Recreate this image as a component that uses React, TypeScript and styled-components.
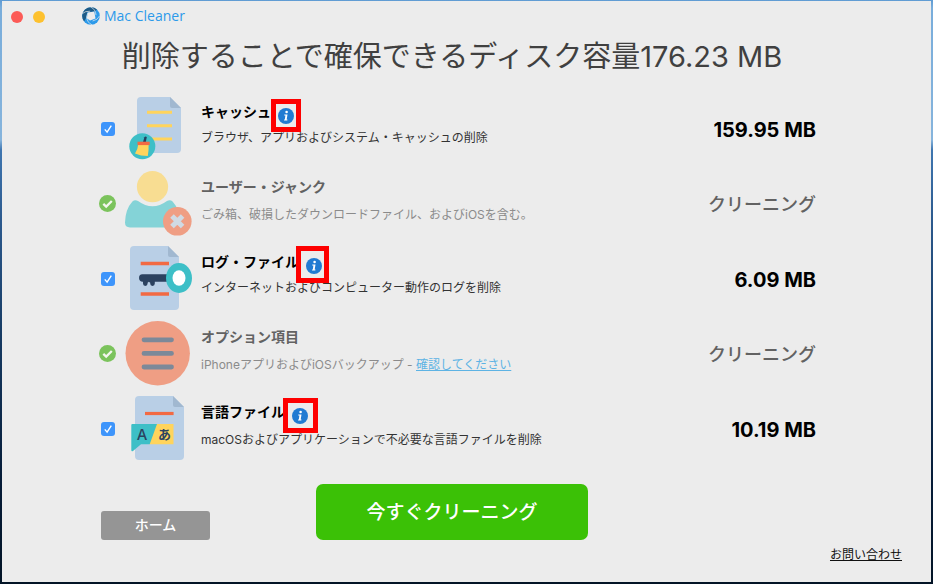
import React from "react";
import styled, { createGlobalStyle } from "styled-components";

const GlobalStyle = createGlobalStyle`
  *, *::before, *::after { box-sizing: border-box; }
  body {
    margin: 0;
    font-family: Inter, "Noto Sans CJK JP", sans-serif;
    color: #000;
  }
`;

const Desktop = styled.div`
  display: flex;
  min-height: 100vh;
  padding: 1px 2px 2px;
  background: linear-gradient(
    #5f9bd3 0, #79addb 8px, #86b4dc 140px, #3f76b0 150px, #2c5a8e 220px, #163a62 340px, #061c38 480px, #031426 100%
  );
`;

const Window = styled.main`
  flex: 1;
  display: flex;
  flex-direction: column;
  padding-right: 29px;
  background: #ececec;
`;

const TitleBar = styled.header`
  display: flex;
  align-items: center;
  height: 31px;
  padding-left: 9px;
`;

const WindowDot = styled.button<{ $color: string }>`
  width: 12px;
  height: 12px;
  margin-right: 10px;
  padding: 0;
  border: 0;
  border-radius: 50%;
  background: ${(p) => p.$color};
`;

const Brand = styled.div`
  display: flex;
  align-items: center;
  gap: 4px;
  margin-left: 27px;
  padding-bottom: 2px;
  color: #2c9aea;
  font: 14px/20px "Open Sans", sans-serif;
`;

const Headline = styled.h1`
  margin: 0;
  font-size: 29px;
  font-weight: 400;
  line-height: 50px;
  text-align: center;
  color: #404040;
`;

const List = styled.ul`
  margin: 0;
  padding: 9px 86px 0 97px;
  list-style: none;
`;

const Row = styled.li`
  display: grid;
  grid-template-columns: 18px 68px 1fr auto;
  column-gap: 7px;
  align-items: center;
  height: 75px;
  padding-top: 1px;
`;

const Tick = styled.label`
  display: grid;
  place-items: center;
  & > * { grid-area: 1 / 1; }
  svg { pointer-events: none; }
`;

const TickBox = styled.input`
  appearance: none;
  width: 14px;
  height: 14px;
  margin: 0;
  border-radius: 3px;
  background: #3e95fb;
`;

const Art = styled.svg`
  display: block;
  width: 68px;
  height: 74px;
`;

const Details = styled.div`
  align-self: start;
  padding: 10px 0 0 2px;
`;

const NameLine = styled.div`
  display: flex;
  gap: 7px;
  height: 22px;
`;

const Name = styled.label<{ $done: boolean }>`
  font-size: 14px;
  font-weight: 700;
  line-height: 20px;
  color: ${(p) => (p.$done ? "#626262" : "#000")};
`;

const InfoButton = styled.button`
  position: relative;
  align-self: flex-end;
  width: 16px;
  height: 16px;
  padding: 0;
  border: 0;
  background: none;
  svg { display: block; }
`;

const Highlight = styled.span<{ $inset: string }>`
  position: absolute;
  inset: ${(p) => p.$inset};
  border: 5px solid #fe0000;
`;

const Note = styled.p<{ $done: boolean; $low: boolean }>`
  margin: ${(p) => (p.$low ? 6 : 4)}px 0 0;
  font-size: 12px;
  line-height: 20px;
  color: ${(p) => (p.$done ? "#8b8b8b" : "#333")};
`;

const NoteLink = styled.a`
  color: #5db3e4;
`;

const Amount = styled.div`
  padding-top: 2px;
  font-size: 20px;
  font-weight: 700;
  line-height: 24px;
`;

const Status = styled.div`
  padding-top: 2px;
  font-size: 18px;
  font-weight: 500;
  line-height: 24px;
  color: #626262;
`;

const Footer = styled.footer`
  flex: 1;
  display: grid;
  grid-template-columns: 1fr auto 1fr;
  align-items: start;
  padding-top: 18px;
`;

const CleanButton = styled.button`
  width: 272px;
  height: 56px;
  padding: 0 0 2px;
  border: 0;
  border-radius: 7px;
  background: #3bc106;
  color: #fff;
  font: 500 19px/24px "Noto Sans CJK JP", sans-serif;
`;

const HomeButton = styled.button`
  justify-self: start;
  width: 109px;
  height: 29px;
  margin: 27px 0 0 99px;
  padding: 0 0 3px;
  border: 0;
  border-radius: 3px;
  background: #959595;
  color: #fff;
  font: 500 14px/20px "Noto Sans CJK JP", sans-serif;
`;

const ContactLink = styled.a`
  justify-self: end;
  margin-top: 61px;
  font-size: 12px;
  line-height: 20px;
  color: #111;
`;

const Logo = () => (
  <svg width="18" height="18" viewBox="0 0 18 18" aria-hidden="true">
    <circle cx="9" cy="9" r="8.8" fill="#2c9aea" />
    <path d="M2.1 14.5A8.8 8.8 0 0 1 15 2.6L12.5 4.4 5.2 5.2 4.2 10.8z" fill="#1d5a86" />
    <path d="M6 5.6 12.3 4.4 13.5 11.5 8 13.6 4.8 11.2z" fill="#ececec" />
    <path d="M.3 6.6Q3 4 8.2 4.2M8.5 0Q13.6 2 14 8.2M17.7 8.8Q15.8 13 10.6 14M10 17.8Q5.4 16 4.6 10M4.6 10 6 5.6" fill="none" stroke="#ececec" strokeWidth=".7" />
  </svg>
);

const Page = ({ x, y, w, h }: { x: number; y: number; w: number; h: number }) => (
  <>
    <path
      d={`M${x + 4} ${y}h${w - 15}l11 11v${h - 15}q0 4-4 4h${8 - w}q-4 0-4-4v${8 - h}q0-4 4-4z`}
      fill="#b9cfe6"
    />
    <path d={`M${x + w - 11} ${y}l11 11h-9q-2 0-2-2z`} fill="#a1b8d0" />
  </>
);

const CacheArt = () => (
  <Art viewBox="0 -3 68 74" aria-hidden="true">
    <Page x={13} y={2} w={44} h={56} />
    <path d="M23 17.3h25M23 30.7h25M23 44h25" stroke="#ffd45c" strokeWidth="3" />
    <circle cx="18.3" cy="51.3" r="13" fill="#3dbfc7" />
    <path d="M18.5 49 20.4 42.2q1-1.2 2.4-.2L21.4 49z" fill="#24405f" />
    <path d="M14.2 49.5h10.4q.3 6-.8 11.5-7 0-12.8-2.5 2.8-3.8 3.2-9z" fill="#ffd45c" />
    <path d="M13.5 46.7h12.2v3.4H13.5z" fill="#f26a43" />
  </Art>
);

const UserArt = () => (
  <Art viewBox="0 -3 68 74" aria-hidden="true">
    <circle cx="28.5" cy="16.7" r="15.6" fill="#f8dd92" />
    <path d="M1 52.5Q1.4 39 8.4 31.4q2.6-2.2 5.6-.4 14.5 10.5 29 0 3-1.8 5.6.4 7 7.6 7.4 21.1 0 4.9-5 4.9H6q-5 0-5-4.9z" fill="#84d3d7" />
    <circle cx="53.3" cy="51.3" r="14.3" fill="#ef9e84" />
    <path d="m48 46 10.6 10.6M58.6 46 48 56.6" stroke="#d0dae4" strokeWidth="5" />
  </Art>
);

const LogArt = () => (
  <Art viewBox="0 -3 68 74" aria-hidden="true">
    <Page x={6} y={1} w={49} h={64} />
    <path d="M16.7 18.5H45M16.7 49H45" stroke="#f26a43" strokeWidth="3.4" />
    <path d="M18.5 29.3H44v7.4H30.8v1.9a2.3 2.3 0 0 1-4.6 0v-.8l-1.4-1-1.2 1v.8a2.3 2.3 0 0 1-4.6 0v-1.9a3.7 3.7 0 0 1-.5-7.4z" fill="#2b4260" />
    <ellipse cx="55" cy="33" rx="13" ry="15" fill="#3dbfc7" />
    <ellipse cx="55" cy="33" rx="6.5" ry="7.7" fill="#fff" />
  </Art>
);

const OptionArt = () => (
  <Art viewBox="0 -3 68 74" aria-hidden="true">
    <circle cx="33.7" cy="33.3" r="32.2" fill="#ef9e84" />
    <path d="M20 19.8h27.5M20 33.4h27.5M20 47h27.5" stroke="#7c8999" strokeWidth="4.8" strokeLinecap="round" />
  </Art>
);

const LanguageArt = () => (
  <Art viewBox="0 -3 68 74" aria-hidden="true">
    <Page x={11} y={1} w={49} h={64} />
    <path d="M21 18.5h28.6" stroke="#f26a43" strokeWidth="3.2" />
    <path d="M32 29h17.5v20.3H25z" fill="#ffd45c" />
    <path d="M8.3 29H33l-7.3 20.3H17L9 56q-1.7 1-1.7-1V30q0-1 1-1z" fill="#3dbfc7" />
    <text x="18" y="44.8" fontFamily="Inter, sans-serif" fontSize="15" fontWeight="500" textAnchor="middle" fill="#2b4260">A</text>
    <text x="40.5" y="44" fontFamily="Noto Sans CJK JP, sans-serif" fontSize="13" fontWeight="700" textAnchor="middle" fill="#2b4260">あ</text>
  </Art>
);

const InfoIcon = () => (
  <svg width="16" height="16" viewBox="0 0 16 16" aria-hidden="true">
    <circle cx="8" cy="8" r="8" fill="#217bd2" />
    <circle cx="8.6" cy="4" r="1.3" fill="#fff" />
    <path d="M6.3 6.4h3.2l-.8 5.2h.8l-.2 1H6l.2-1h.6l.6-4.2h-1.2z" fill="#fff" />
  </svg>
);

const DoneIcon = () => (
  <svg width="18" height="18" viewBox="0 0 18 18" role="img" aria-label="完了">
    <circle cx="8.5" cy="8.5" r="8.5" fill="#7bc35c" />
    <path d="m4.3 8.8 2.9 2.8 5.6-5.6" fill="none" stroke="#f3f6ee" strokeWidth="2.3" />
  </svg>
);

interface Item {
  id: string;
  name: string;
  note: React.ReactNode;
  art: React.ReactNode;
  amount?: string;
  low?: boolean;
  highlight?: string;
}

const items: Item[] = [
  {
    id: "cache",
    name: "キャッシュ",
    note: "ブラウザ、アプリおよびシステム・キャッシュの削除",
    art: <CacheArt />,
    amount: "159.95 MB",
    highlight: "-9px -7px -8px",
  },
  {
    id: "junk",
    name: "ユーザー・ジャンク",
    note: "ごみ箱、破損したダウンロードファイル、およびiOSを含む。",
    art: <UserArt />,
    low: true,
  },
  {
    id: "log",
    name: "ログ・ファイル",
    note: "インターネットおよびコンピューター動作のログを削除",
    art: <LogArt />,
    amount: "6.09 MB",
    highlight: "-12px -7px -9px -10px",
  },
  {
    id: "option",
    name: "オプション項目",
    note: <>iPhoneアプリおよびiOSバックアップ - <NoteLink href="#check">確認してください</NoteLink></>,
    art: <OptionArt />,
    low: true,
  },
  {
    id: "language",
    name: "言語ファイル",
    note: "macOSおよびアプリケーションで不必要な言語ファイルを削除",
    art: <LanguageArt />,
    amount: "10.19 MB",
    low: true,
    highlight: "-10px -10px -9px -9px",
  },
];

const ItemRow = ({ item }: { item: Item }) => {
  const done = !item.amount;
  return (
    <Row>
      {done ? (
        <DoneIcon />
      ) : (
        <Tick>
          <TickBox type="checkbox" id={item.id} defaultChecked />
          <svg width="14" height="14" viewBox="0 0 14 14" aria-hidden="true">
            <path d="m3.8 7.4 2.3 2.7 4.2-6.5" fill="none" stroke="#fff" strokeWidth="1.4" />
          </svg>
        </Tick>
      )}
      {item.art}
      <Details>
        <NameLine>
          <Name as={done ? "span" : "label"} htmlFor={done ? undefined : item.id} $done={done}>{item.name}</Name>
          {item.highlight && (
            <InfoButton type="button" aria-label={`${item.name}の情報`}>
              <InfoIcon />
              <Highlight $inset={item.highlight} />
            </InfoButton>
          )}
        </NameLine>
        <Note $done={done} $low={!!item.low}>{item.note}</Note>
      </Details>
      {done ? <Status>クリーニング</Status> : <Amount>{item.amount}</Amount>}
    </Row>
  );
};

export default function App() {
  return (
    <>
      <GlobalStyle />
      <Desktop>
        <Window>
          <TitleBar>
            <WindowDot type="button" aria-label="閉じる" $color="#fc5b57" />
            <WindowDot type="button" aria-label="最小化" $color="#fdc12f" />
            <Brand>
              <Logo />
              Mac Cleaner
            </Brand>
          </TitleBar>
          <Headline>削除することで確保できるディスク容量176.23 MB</Headline>
          <List>
            {items.map((item) => <ItemRow key={item.id} item={item} />)}
          </List>
          <Footer>
            <HomeButton type="button">ホーム</HomeButton>
            <CleanButton type="button">今すぐクリーニング</CleanButton>
            <ContactLink href="#contact">お問い合わせ</ContactLink>
          </Footer>
        </Window>
      </Desktop>
    </>
  );
}
